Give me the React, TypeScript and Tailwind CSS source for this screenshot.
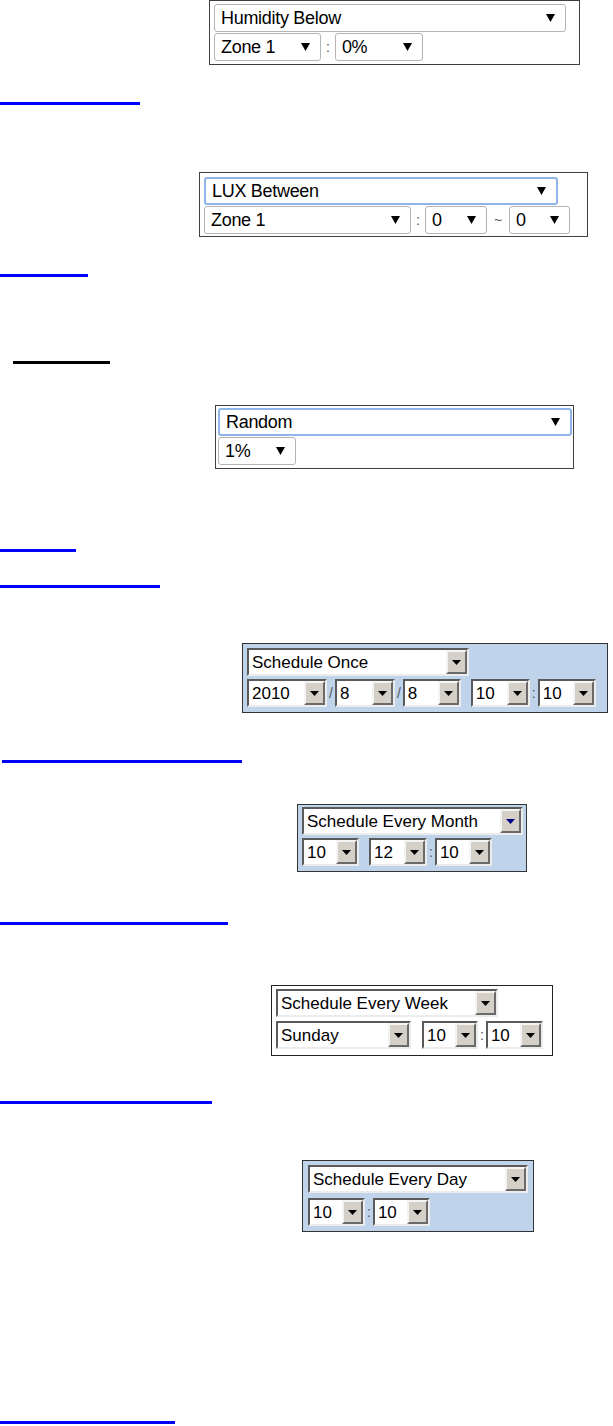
import React from "react";

const FONT = { fontFamily: '"Liberation Sans", Arial, sans-serif' };

/** small solid triangle used by every dropdown */
const Arrow = ({ color = "#000", w = 9, h = 7 }: { color?: string; w?: number; h?: number }) => (
  <svg width={w} height={h} viewBox={`0 0 ${w} ${h}`} className="shrink-0">
    <polygon points={`0,0 ${w},0 ${w / 2},${h}`} fill={color} />
  </svg>
);

// Browser-style select (light grey rounded border)
const ModernSelect = ({
  label,
  w,
  focused = false,
}: {
  label: string;
  w: string;
  focused?: boolean;
}) => (
  <div
    className={`${w} h-[28px] flex items-center justify-between bg-white rounded-[3px] pl-[6px] pr-[10px] text-[18px] leading-none text-black ${
      focused ? "border-2 border-[#8fb4ea]" : "border border-[#b5b5b5]"
    }`}
  >
    <span className="tracking-[-0.3px]">{label}</span>
    <Arrow w={9} h={8} />
  </div>
);

// Old windows style combobox: sunken field + raised grey button
const ClassicSelect = ({
  label,
  w,
  arrowColor,
}: {
  label: string;
  w: string;
  arrowColor?: string;
}) => (
  <div
    className={`${w} h-[28px] flex border-2 border-t-[#5a5a5a] border-l-[#5a5a5a] border-b-[#ececec] border-r-[#ececec] bg-white`}
  >
    <div className="flex-1 flex items-center pl-[3px] text-[17px] leading-none text-black">
      {label}
    </div>
    <div className="w-[21px] flex items-center justify-center bg-[#d4d0c8] border-2 border-t-[#f4f4f4] border-l-[#f4f4f4] border-b-[#6a6a6a] border-r-[#6a6a6a]">
      <Arrow color={arrowColor} w={9} h={5} />
    </div>
  </div>
);

const Sep = ({ ch, cls = "" }: { ch: string; cls?: string }) => (
  <span className={`text-[14px] text-[#555] leading-none ${cls}`}>{ch}</span>
);

const Link = ({ w, ml = "", mt }: { w: string; ml?: string; mt: string }) => (
  <div className={`${w} ${ml} ${mt} h-[3px] bg-[#0000ff]`} />
);

const App = () => {
  return (
    <div className="w-[613px] h-[1426px] bg-white overflow-hidden" style={FONT}>
      {/* Humidity Below */}
      <div className="ml-[209px] w-[371px] border border-[#404040] bg-white pt-[3px] pl-[4px] pb-[3px] flex flex-col gap-[1px]">
        <ModernSelect label="Humidity Below" w="w-[352px]" />
        <div className="flex items-center">
          <ModernSelect label="Zone 1" w="w-[107px]" />
          <Sep ch=":" cls="mx-[5px]" />
          <ModernSelect label="0%" w="w-[88px]" />
        </div>
      </div>

      <Link w="w-[140px]" mt="mt-[37px]" />

      {/* LUX Between */}
      <div className="mt-[67px] ml-[199px] w-[389px] border border-[#404040] bg-white pt-[4px] pl-[4px] pb-[2px] flex flex-col gap-[1px]">
        <ModernSelect label="LUX Between" w="w-[354px]" focused />
        <div className="flex items-center">
          <ModernSelect label="Zone 1" w="w-[207px]" />
          <Sep ch=":" cls="mx-[5px]" />
          <ModernSelect label="0" w="w-[62px]" />
          <Sep ch="~" cls="mx-[7px]" />
          <ModernSelect label="0" w="w-[61px]" />
        </div>
      </div>

      <Link w="w-[88px]" mt="mt-[37px]" />

      <div className="mt-[84px] ml-[13px] w-[97px] h-[3px] bg-black" />

      {/* Random */}
      <div className="mt-[41px] ml-[215px] w-[359px] border border-[#404040] bg-white pt-[2px] pl-[2px] pr-[1px] pb-[3px] flex flex-col gap-[1px]">
        <ModernSelect label="Random" w="w-full" focused />
        <ModernSelect label="1%" w="w-[78px]" />
      </div>

      <Link w="w-[76px]" mt="mt-[80px]" />
      <Link w="w-[160px]" mt="mt-[33px]" />

      {/* Schedule Once */}
      <div className="mt-[55px] ml-[242px] w-[366px] border border-[#333] bg-[#bfd4ea] pt-[4px] pl-[4px] pb-[5px] flex flex-col gap-[3px]">
        <ClassicSelect label="Schedule Once" w="w-[222px]" />
        <div className="flex items-center">
          <ClassicSelect label="2010" w="w-[80px]" />
          <Sep ch="/" cls="mx-[2px]" />
          <ClassicSelect label="8" w="w-[60px]" />
          <Sep ch="/" cls="mx-[2px]" />
          <ClassicSelect label="8" w="w-[58px]" />
          <div className="w-[10px]" />
          <ClassicSelect label="10" w="w-[59px]" />
          <Sep ch=":" cls="mx-[2px]" />
          <ClassicSelect label="10" w="w-[58px]" />
        </div>
      </div>

      <Link w="w-[240px]" ml="ml-[2px]" mt="mt-[47px]" />

      {/* Schedule Every Month */}
      <div className="mt-[41px] ml-[297px] w-[230px] border border-[#333] bg-[#bfd4ea] pt-[2px] pl-[4px] pb-[5px] flex flex-col gap-[3px]">
        <ClassicSelect label="Schedule Every Month" w="w-[221px]" arrowColor="#000080" />
        <div className="flex items-center">
          <ClassicSelect label="10" w="w-[57px]" />
          <div className="w-[10px]" />
          <ClassicSelect label="12" w="w-[58px]" />
          <Sep ch=":" cls="mx-[2px]" />
          <ClassicSelect label="10" w="w-[57px]" />
        </div>
      </div>

      <Link w="w-[228px]" mt="mt-[50px]" />

      {/* Schedule Every Week */}
      <div className="mt-[60px] ml-[271px] w-[282px] border border-[#222] bg-white pt-[3px] pl-[4px] pb-[6px] flex flex-col gap-[4px]">
        <ClassicSelect label="Schedule Every Week" w="w-[222px]" />
        <div className="flex items-center">
          <ClassicSelect label="Sunday" w="w-[135px]" />
          <div className="w-[11px]" />
          <ClassicSelect label="10" w="w-[56px]" />
          <Sep ch=":" cls="mx-[2px]" />
          <ClassicSelect label="10" w="w-[57px]" />
        </div>
      </div>

      <Link w="w-[212px]" mt="mt-[45px]" />

      {/* Schedule Every Day */}
      <div className="mt-[56px] ml-[302px] w-[232px] border border-[#333] bg-[#bfd4ea] pt-[4px] pl-[5px] pb-[5px] flex flex-col gap-[5px]">
        <ClassicSelect label="Schedule Every Day" w="w-[220px]" />
        <div className="flex items-center">
          <ClassicSelect label="10" w="w-[57px]" />
          <Sep ch=":" cls="mx-[2px]" />
          <ClassicSelect label="10" w="w-[57px]" />
        </div>
      </div>

      <Link w="w-[175px]" mt="mt-[189px]" />
    </div>
  );
};

export default App;
